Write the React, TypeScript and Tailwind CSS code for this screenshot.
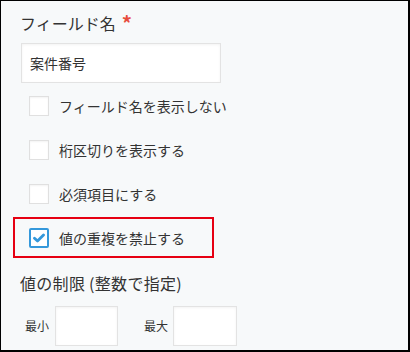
import React from 'react';

const font = { fontFamily: '"Noto Sans CJK JP", "Noto Sans", sans-serif' };

function Box({ checked }: { checked?: boolean }) {
  if (checked) {
    return (
      <span className="flex h-[20px] w-[20px] shrink-0 items-center justify-center rounded-[2px] border-2 border-[#3498db] bg-white">
        <svg width="12" height="10" viewBox="0 0 12 10">
          <path d="M1.5 5.2 L4.5 8 L10.5 2" fill="none" stroke="#3498db" strokeWidth="2.8" strokeLinecap="round" strokeLinejoin="round" />
        </svg>
      </span>
    );
  }
  return <span className="h-[20px] w-[20px] shrink-0 border border-[#e0e0e0] bg-white shadow-[inset_0_1px_2px_rgba(0,0,0,0.05)]" />;
}

function Option({ label, checked }: { label: string; checked?: boolean }) {
  return (
    <div className="flex items-center gap-[10px] pl-[28px]">
      <Box checked={checked} />
      <span className="text-[14px] leading-[20px] text-[#333]">{label}</span>
    </div>
  );
}

export default function App() {
  return (
    <div
      className="h-[352px] w-[410px] overflow-hidden border-t border-l border-r-2 border-b-2 border-black bg-[#f7f9fa]"
      style={font}
    >
      <div className="pt-[11px]">
        <div className="flex items-center pl-[19px] text-[16px] leading-[22px] text-[#333]">
          フィールド名
          <span className="ml-[6px] text-[20px] font-bold leading-[22px] text-[#e74c3c]">*</span>
        </div>
        <div className="ml-[20px] mt-[9px] flex h-[40px] w-[200px] items-center border border-[#e3e3e3] bg-white px-[8px] text-[14px] text-[#333] shadow-[inset_0_1px_3px_rgba(0,0,0,0.05)]">
          案件番号
        </div>

        <div className="mt-[13px] flex flex-col gap-[24px]">
          <Option label="フィールド名を表示しない" />
          <Option label="桁区切りを表示する" />
          <Option label="必須項目にする" />
        </div>

        <div className="ml-[12px] mt-[13px] flex h-[41px] w-[201px] items-center border-2 border-[#e60012] pl-[14px]">
          <div className="flex items-center gap-[10px]">
            <Box checked />
            <span className="text-[14px] leading-[20px] text-[#333]">値の重複を禁止する</span>
          </div>
        </div>

        <div className="mt-[14px] pl-[19px] text-[16px] leading-[22px] tracking-[0.3px] text-[#333]">値の制限 (整数で指定)</div>

        <div className="mt-[12px] flex items-center pl-[24px]">
          <span className="text-[12px] text-[#333]">最小</span>
          <span className="ml-[6px] h-[40px] w-[63px] border border-[#e3e3e3] bg-white shadow-[inset_0_1px_3px_rgba(0,0,0,0.05)]" />
          <span className="ml-[26px] text-[12px] text-[#333]">最大</span>
          <span className="ml-[5px] h-[40px] w-[64px] border border-[#e3e3e3] bg-white shadow-[inset_0_1px_3px_rgba(0,0,0,0.05)]" />
        </div>
      </div>
    </div>
  );
}
